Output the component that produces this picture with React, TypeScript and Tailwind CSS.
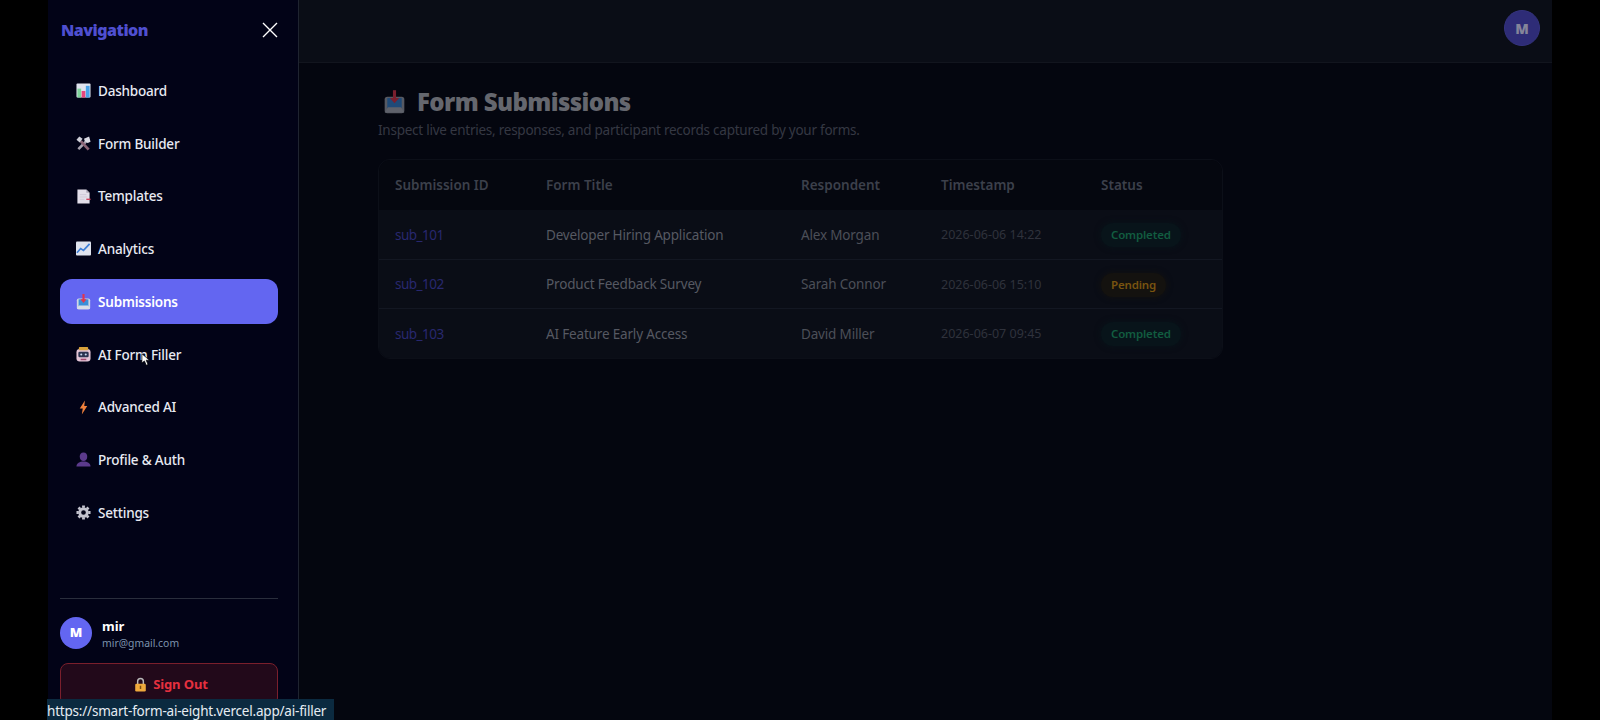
const FONT = "font-['Noto_Sans','Open_Sans',sans-serif]";

function ChartIcon() {
  return (
    <svg viewBox="0 0 16 16" className="w-[15px] h-[15px]">
      <rect x="0.5" y="0.5" width="15" height="15" rx="1" fill="#dfe3ee" />
      <rect x="1.5" y="6" width="4" height="9.5" fill="#7ed39a" />
      <rect x="6" y="8.5" width="4" height="7" fill="#e8467c" />
      <rect x="10.5" y="3" width="4" height="12.5" fill="#4aa3e8" />
    </svg>
  );
}

function ToolsIcon() {
  return (
    <svg viewBox="0 0 16 16" className="w-[15px] h-[15px]">
      <path d="M2.5 14 L12 4.5" stroke="#a9a4b0" strokeWidth="2.8" />
      <path d="M8.5 3 L14 0.5 L15.5 6 L12.5 7.5 L9.5 5.5Z" fill="#dcdce4" />
      <path d="M13.5 14.5 L5 5.5" stroke="#8a6374" strokeWidth="3" />
      <path d="M0.5 4 L3.5 0.5 L7 3 L4 7Z" fill="#cfcfd8" />
    </svg>
  );
}

function NoteIcon() {
  return (
    <svg viewBox="0 0 16 16" className="w-[15px] h-[15px]">
      <path d="M1.5 0.5 H11 L14.5 4 V15.5 H1.5Z" fill="#e3dfea" />
      <path d="M11 0.5 L14.5 4 H11Z" fill="#a9a5b5" />
      <path d="M4 6 H11 M4 8.5 H12 M4 11 H9" stroke="#c9c3d3" strokeWidth="0.8" />
      <path d="M11 11 H15.5" stroke="#d0435f" strokeWidth="1.5" />
    </svg>
  );
}

function TrendIcon() {
  return (
    <svg viewBox="0 0 16 16" className="w-[15px] h-[15px]">
      <rect x="0" y="0.5" width="16" height="15" rx="1" fill="#dfe3ee" />
      <path d="M1 12.5 L5 8 L8 10 L14.5 3" stroke="#3f7fd6" strokeWidth="1.8" fill="none" />
    </svg>
  );
}

function InboxIcon({ className = "w-[15px] h-[16px]", dim = false }: { className?: string; dim?: boolean }) {
  return (
    <svg viewBox="0 0 16 18" className={className}>
      <rect x="0.5" y="5" width="15" height="12.5" rx="2" fill={dim ? "#565962" : "#cfd6e4"} />
      <rect x="2.5" y="6" width="11" height="8" fill={dim ? "#1f4a78" : "#3a8fd8"} />
      <path d="M0.5 17 L3 13 H13 L15.5 17Z" fill={dim ? "#5f626b" : "#d8dde8"} />
      <path d="M8 0 V7" stroke={dim ? "#7a1f2e" : "#e0364f"} strokeWidth="2.4" />
      <path d="M4.5 6 H11.5 L8 10Z" fill={dim ? "#7a1f2e" : "#e0364f"} />
    </svg>
  );
}

function RobotIcon() {
  return (
    <svg viewBox="0 0 16 16" className="w-[15px] h-[15px]">
      <rect x="0.5" y="2" width="15" height="13.5" rx="3.5" fill="#e2c4d6" />
      <rect x="3" y="0" width="10" height="3.5" rx="1" fill="#d9a23b" />
      <rect x="2.5" y="5" width="11" height="6" rx="1.5" fill="#2b3350" />
      <circle cx="5.6" cy="8" r="1.1" fill="#c9d8f0" />
      <circle cx="10.4" cy="8" r="1.1" fill="#c9d8f0" />
      <rect x="5" y="12.5" width="6" height="1.6" fill="#a2466e" />
    </svg>
  );
}

function BoltIcon() {
  return (
    <svg viewBox="0 0 16 16" className="w-[15px] h-[15px]">
      <path d="M9.5 0.5 L4 9 H7.2 L6.2 15.5 L12 6.5 H8.8Z" fill="#f0803c" />
    </svg>
  );
}

function PersonIcon() {
  return (
    <svg viewBox="0 0 16 16" className="w-[15px] h-[15px]">
      <path d="M8 0.5 C10.8 0.5 12 2.5 12 5 C12 7.5 10.5 9.5 8 9.5 C5.5 9.5 4 7.5 4 5 C4 2.5 5.2 0.5 8 0.5Z" fill="#5b3a8c" />
      <path d="M0.5 15.5 C0.5 11.5 4 10 8 10 C12 10 15.5 11.5 15.5 15.5Z" fill="#5b3a8c" />
    </svg>
  );
}

function GearIcon() {
  return (
    <svg viewBox="0 0 16 16" className="w-[15px] h-[15px]">
      <path
        d="M8 3 V0.5 M8 15.5 V13 M3 8 H0.5 M15.5 8 H13 M4.5 4.5 L2.7 2.7 M13.3 13.3 L11.5 11.5 M4.5 11.5 L2.7 13.3 M13.3 2.7 L11.5 4.5"
        stroke="#c4c4cf"
        strokeWidth="3"
      />
      <circle cx="8" cy="8" r="4" fill="none" stroke="#c4c4cf" strokeWidth="3" />
    </svg>
  );
}

function LockIcon() {
  return (
    <svg viewBox="0 0 16 18" className="w-[13px] h-[15px]">
      <path d="M4.5 9 V5 a3.5 3.5 0 0 1 7 0 V9" stroke="#b9b9b9" strokeWidth="1.8" fill="none" />
      <rect x="1.5" y="8" width="13" height="9.5" rx="1.5" fill="#efa93c" />
      <rect x="7.1" y="10.5" width="1.8" height="4" fill="#7a4c10" />
    </svg>
  );
}

const navItems = [
  { label: "Dashboard", icon: <ChartIcon /> },
  { label: "Form Builder", icon: <ToolsIcon /> },
  { label: "Templates", icon: <NoteIcon /> },
  { label: "Analytics", icon: <TrendIcon /> },
  { label: "Submissions", icon: <InboxIcon />, active: true },
  { label: "AI Form Filler", icon: <RobotIcon /> },
  { label: "Advanced AI", icon: <BoltIcon /> },
  { label: "Profile & Auth", icon: <PersonIcon /> },
  { label: "Settings", icon: <GearIcon /> },
];

const rows = [
  { id: "sub_101", title: "Developer Hiring Application", who: "Alex Morgan", time: "2026-06-06 14:22", status: "Completed" },
  { id: "sub_102", title: "Product Feedback Survey", who: "Sarah Connor", time: "2026-06-06 15:10", status: "Pending" },
  { id: "sub_103", title: "AI Feature Early Access", who: "David Miller", time: "2026-06-07 09:45", status: "Completed" },
];

export default function App() {
  return (
    <div className={`${FONT} relative h-[720px] overflow-hidden bg-black px-12 flex`}>
      <aside className="w-[251px] shrink-0 h-full flex flex-col bg-[#020317] border-r border-[#1f2430] pl-3 pr-5">
        <div className="h-[60px] flex items-center justify-between">
          <span className="ml-[1px] text-[16px] font-black tracking-[-0.5px] text-[#4f4fd0]">Navigation</span>
          <svg viewBox="0 0 16 16" className="w-4 h-4 text-white" fill="none" stroke="currentColor" strokeWidth="1.4">
            <path d="M1 1 L15 15 M15 1 L1 15" />
          </svg>
        </div>

        <nav className="flex-1 flex flex-col gap-[7.75px] pt-[8px]">
          {navItems.map((item) => (
            <div
              key={item.label}
              className={`h-[45px] shrink-0 rounded-xl px-4 flex items-center gap-[7px] text-[13.5px] tracking-[-0.2px] ${
                item.active ? "bg-[#6366f1] text-white font-semibold" : "text-[#e8eaf2] font-medium"
              }`}
            >
              {item.icon}
              <span className="pt-[1px]">{item.label}</span>
            </div>
          ))}
        </nav>

        <div className="border-t border-[#2a2e3c] pt-[17px] pb-[14px]">
          <div className="h-[34px] flex items-center gap-[10px]">
            <div className="w-8 h-8 rounded-full bg-[#6366f1] flex items-center justify-center text-white text-[13px] font-black">
              M
            </div>
            <div className="flex flex-col pt-[3px]">
              <span className="text-[13px] leading-[17px] font-bold text-white">mir</span>
              <span className="text-[10.4px] leading-[17px] text-[#7d93ad]">mir@gmail.com</span>
            </div>
          </div>
          <button className="mt-[13px] w-full h-[43px] pl-1 rounded-lg border border-[#7a1f2c] bg-[#22091a] flex items-center justify-center gap-[6px] text-[13px] tracking-[-0.1px] font-bold text-[#e5303f]">
            <LockIcon />
            Sign Out
          </button>
        </div>
      </aside>

      <div className="flex-1 flex flex-col bg-[#04060f]">
        <header className="h-[63px] shrink-0 bg-[#0a0d16] border-b border-[#12151e] flex justify-end pt-[10px] pr-3">
          <div className="w-9 h-9 rounded-full bg-[#2e2c77] border border-[#34337e] flex items-center justify-center text-[14px] font-black text-[#85859a]">
            M
          </div>
        </header>

        <main className="flex-1 pl-[79px] pt-[21px]">
          <h1 className="flex items-center gap-[12px] pl-[6px] h-9 text-[24px] font-black tracking-[-0.6px] text-[#65676e]">
            <InboxIcon className="w-[21px] h-[24px]" dim />
            Form Submissions
          </h1>
          <p className="text-[13.5px] tracking-[-0.25px] leading-5 text-[#353843]">
            Inspect live entries, responses, and participant records captured by your forms.
          </p>

          <div className="mt-[19px] w-[845px] rounded-xl border border-[#0c0f18] overflow-hidden">
            <table className="w-full border-collapse table-fixed text-left text-[13.5px]">
              <colgroup>
                <col className="w-[151px]" />
                <col className="w-[255px]" />
                <col className="w-[140px]" />
                <col className="w-[160px]" />
                <col />
              </colgroup>
              <thead className="bg-[#05070f] text-[#3c404b]">
                <tr className="h-[50px]">
                  <th className="pl-4 font-semibold">Submission ID</th>
                  <th className="pl-4 font-semibold">Form Title</th>
                  <th className="pl-4 font-semibold">Respondent</th>
                  <th className="pl-4 font-semibold">Timestamp</th>
                  <th className="pl-4 font-semibold">Status</th>
                </tr>
              </thead>
              <tbody className="bg-[#0a0d16] text-[#565962] tracking-[-0.17px]">
                {rows.map((row) => (
                  <tr key={row.id} className="h-[49.4px] border-b border-[#131722] last:border-b-0">
                    <td className="pl-4 pt-[1px] text-[#28286f] tracking-[-0.5px]">{row.id}</td>
                    <td className="pl-4 pt-[1px]">{row.title}</td>
                    <td className="pl-4 pt-[1px] text-[#4c4f58]">{row.who}</td>
                    <td className="pl-4 pt-[2px] text-[12.5px] tracking-normal text-[#2f323c]">{row.time}</td>
                    <td className="pl-4 pt-[1px]">
                      <span
                        className={`inline-block rounded-full px-[10px] text-[11.5px] leading-6 font-semibold ${
                          row.status === "Completed"
                            ? "bg-[#08141a] text-[#125c40] shadow-[0_0_6px_#08141a]"
                            : "bg-[#14120f] text-[#79540f] shadow-[0_0_6px_#14120f]"
                        }`}
                      >
                        {row.status}
                      </span>
                    </td>
                  </tr>
                ))}
              </tbody>
            </table>
          </div>
        </main>
      </div>

      <div className="absolute left-[47px] bottom-0 h-[21px] w-[287px] bg-[#0b2a40] text-[13.5px] tracking-[-0.2px] leading-[24px] text-[#e6edf3] whitespace-nowrap">
        https://smart-form-ai-eight.vercel.app/ai-filler
      </div>

      <svg viewBox="0 0 12 18" className="absolute left-[141px] top-[353px] w-[9px] h-[13px]">
        <path d="M1 1 V14 L4.5 11 L7 17 L9.5 16 L7 10 H11.5Z" fill="#fff" stroke="#000" strokeWidth="1" />
      </svg>
    </div>
  );
}
